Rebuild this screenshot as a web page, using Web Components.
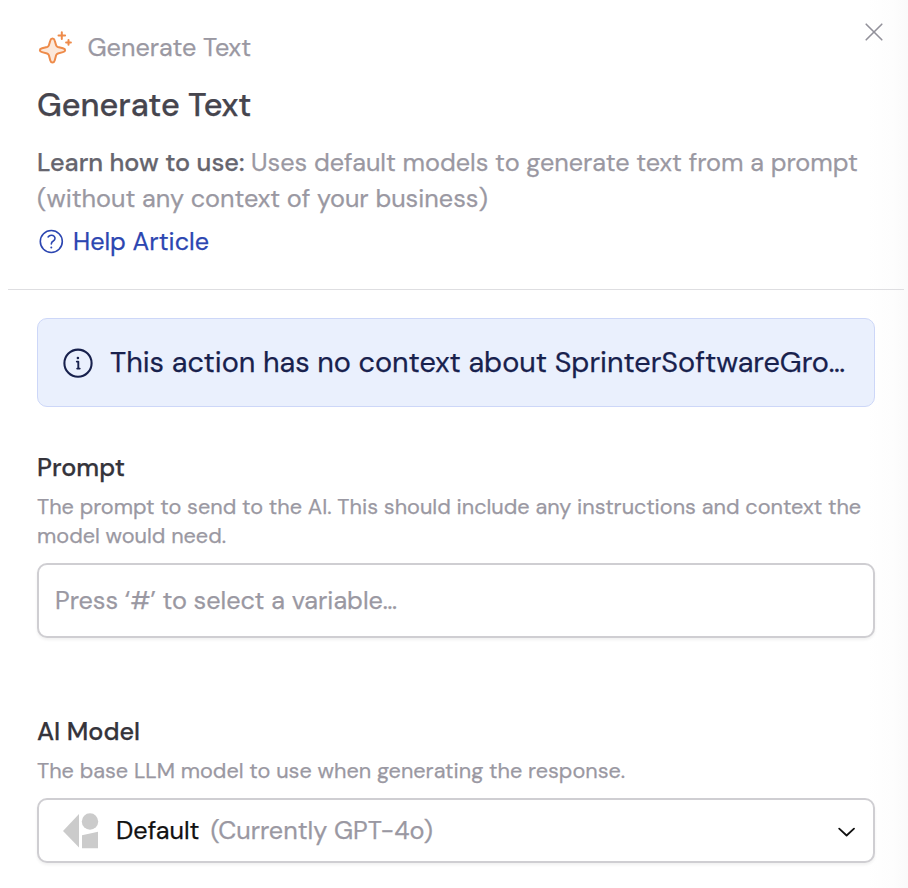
<!DOCTYPE html>
<html lang="en">
<head>
<meta charset="utf-8">
<title>Generate Text</title>
<style>
body {
  margin: 0;
  background: #fff;
  font-family: "DM Sans", Inter, "Liberation Sans", sans-serif;
}
</style>
</head>
<body>

<action-panel>
  <panel-header slot="header" name="Generate Text" heading="Generate Text">
    <b>Learn how to use:</b> Uses default models to generate text from a prompt<br>(without any context of your business)
    <help-link slot="help">Help Article</help-link>
  </panel-header>
  <info-banner>This action has no context about SprinterSoftwareGro…</info-banner>
  <form-field>
    <span slot="label">Prompt</span>
    The prompt to send to the AI. This should include any instructions and context the<br>model would need.
    <prompt-input slot="control" placeholder="Press ‘#’ to select a variable…"></prompt-input>
  </form-field>
  <form-field>
    <span slot="label">AI Model</span>
    The base LLM model to use when generating the response.
    <model-select slot="control" value="Default" note="(Currently GPT-4o)"></model-select>
  </form-field>
</action-panel>

<script>
class BaseElement extends HTMLElement {
  constructor() {
    super()
    const template = document.createElement("template")
    template.innerHTML = this.constructor.markup
    this.attachShadow({ mode: "open" }).append(template.content.cloneNode(true))
  }

  fill(selector, attribute) {
    this.shadowRoot.querySelector(selector).textContent = this.getAttribute(attribute)
  }
}

class ActionPanel extends BaseElement {
  static markup = /*html*/`
<style>
:host {
  display: block;
  box-sizing: border-box;
  height: 888px;
  overflow: hidden;
  background: linear-gradient(to right, #fff 868px, #fdfdfd 892px, #fafafa 908px);
  font-size: 25.22px;
  -webkit-text-stroke: 0.25px;
}
.body { padding: 28px 33px 0 37px; }
::slotted(form-field) { margin-top: 43px; }
::slotted(form-field:last-child) { margin-top: 76px; }
</style>
<slot name="header"></slot>
<div class="body"><slot></slot></div>
`
}

class PanelHeader extends BaseElement {
  static markup = /*html*/`
<style>
:host {
  display: block;
  margin: 0 4px 0 8px;
  padding: 28px 0 29px 29px;
  border-bottom: 1px solid #dedee1;
}
.top {
  display: flex;
  align-items: center;
  height: 40px;
}
.spark { width: 36px; height: 36px; margin: -4px 14.5px 0 0; }
.name { flex: 1; margin-top: -2px; color: #9a98a2; }
.close {
  width: 18px;
  height: 18px;
  margin: -33px 21.5px 0 0;
}
h1 {
  margin: 15px 0 18px;
  font-size: 32.4px;
  line-height: 44px;
  font-weight: 500;
  color: #46454e;
}
p {
  margin: 0 0 7px;
  line-height: 36px;
  white-space: nowrap;
  color: #9a98a2;
}
::slotted(b) { font-weight: 500; color: #66656e; }
</style>
<div class="top">
  <svg class="spark" viewBox="0 0 36 36" fill="none" stroke="#ee8b4a" stroke-width="2" stroke-linecap="round" stroke-linejoin="round">
    <path fill="#fce8da" d="M13.3 12.5C14 9.8 17 9.8 17.7 12.5L19.1 17.2Q19.5 18.6 20.9 19L25.9 20.3C28.9 21.1 28.9 23.3 25.9 24.1L20.9 25.5Q19.5 25.9 19.1 27.3L17.7 32.4C17 35.1 14 35.1 13.3 32.4L11.9 27.3Q11.5 25.9 10.1 25.5L5.1 24.1C2.1 23.3 2.1 21.1 5.1 20.3L10.1 19Q11.5 18.6 11.9 17.2Z"/>
    <path d="M24.8 4.3V10.9M21.5 7.6H28.1M31.5 12V16.8M29.1 14.4H33.9"/>
  </svg>
  <span class="name"></span>
  <svg class="close" viewBox="0 0 18 18" fill="none" stroke="#92919a" stroke-width="1.6" stroke-linecap="round">
    <path d="M1.2 1.2L16.8 16.8M16.8 1.2L1.2 16.8"/>
  </svg>
</div>
<h1></h1>
<p><slot></slot></p>
<slot name="help"></slot>
`

  connectedCallback() {
    this.fill(".name", "name")
    this.fill("h1", "heading")
  }
}

class HelpLink extends BaseElement {
  static markup = /*html*/`
<style>
:host {
  display: flex;
  align-items: center;
  height: 36px;
  color: #2c46b1;
  cursor: pointer;
}
svg { width: 26px; height: 26px; margin: 0 9px 0 1px; }
span { margin-top: -2px; }
</style>
<svg viewBox="0 0 26 26" fill="none" stroke="currentColor" stroke-width="1.6" stroke-linecap="round" stroke-linejoin="round">
  <circle cx="13.3" cy="12.5" r="11"/>
  <path d="M10.1 7.9C11.7 5.9 14.6 5.8 16.1 7.3C17.7 9 17 11.1 15.3 12C14 12.7 13.3 13.3 13.3 14.9"/>
  <circle cx="13.3" cy="18.6" r="1" fill="currentColor" stroke="none"/>
</svg>
<span><slot></slot></span>
`
}

class InfoBanner extends BaseElement {
  static markup = /*html*/`
<style>
:host {
  display: flex;
  align-items: center;
  box-sizing: border-box;
  height: 89px;
  padding: 0 25px 0 24px;
  border: 1px solid #cdd7f8;
  border-radius: 10px;
  background: #eaf0fd;
  color: #18214d;
  font-size: 28.8px;
}
svg { flex: none; width: 32px; height: 32px; margin-right: 16px; }
span { margin-top: -2px; white-space: nowrap; }
</style>
<svg viewBox="0 0 32 32" fill="none" stroke="currentColor" stroke-width="2.1" stroke-linecap="round" stroke-linejoin="round">
  <circle cx="16" cy="16.2" r="13.6"/>
  <path stroke-width="1.9" d="M14.8 14.6H16.3V21.4M15.2 21.6H17.7"/>
  <circle cx="15.9" cy="11" r="1.3" fill="currentColor" stroke="none"/>
</svg>
<span><slot></slot></span>
`
}

class FormField extends BaseElement {
  static markup = /*html*/`
<style>
:host { display: block; }
.label {
  line-height: 36px;
  font-weight: 500;
  color: #35343b;
}
.description {
  margin: 7px 0 12px;
  font-size: 21.66px;
  line-height: 29px;
  white-space: nowrap;
  color: #9a98a2;
}
</style>
<div class="label"><slot name="label"></slot></div>
<div class="description"><slot></slot></div>
<slot name="control"></slot>
`
}

class PromptInput extends BaseElement {
  static markup = /*html*/`
<style>
:host {
  display: flex;
  align-items: center;
  box-sizing: border-box;
  height: 75px;
  padding: 0 16px;
  border: 2px solid #cfced2;
  border-radius: 10px;
  background: #fff;
  box-shadow: 0 2px 3px rgba(0, 0, 0, 0.06);
  color: #9a98a2;
}
</style>
<span></span>
`

  connectedCallback() {
    this.fill("span", "placeholder")
  }
}

class ModelSelect extends BaseElement {
  static markup = /*html*/`
<style>
:host {
  display: flex;
  align-items: center;
  box-sizing: border-box;
  height: 65px;
  padding: 0 17px 0 23px;
  border: 2px solid #cfced2;
  border-radius: 10px;
  background: #fff;
  box-shadow: 0 2px 3px rgba(0, 0, 0, 0.06);
}
.logo { width: 38px; height: 38px; margin-right: 16px; }
.value { margin-right: 11px; color: #111; }
.note { flex: 1; color: #9a98a2; }
.arrow { width: 18px; height: 10px; margin-top: 3px; }
</style>
<svg class="logo" viewBox="0 0 38 38" fill="#cbcbcb">
  <path d="M17 2V35.5L1 19Z"/>
  <circle cx="28" cy="9.5" r="8.2"/>
  <path d="M20 23.3L36 19.7V36.2H20Z"/>
</svg>
<span class="value"></span>
<span class="note"></span>
<svg class="arrow" viewBox="0 0 18 10" fill="none" stroke="#111" stroke-width="1.8" stroke-linecap="round" stroke-linejoin="round">
  <path d="M1.2 1.6L8.6 8.5L16 1.6"/>
</svg>
`

  connectedCallback() {
    this.fill(".value", "value")
    this.fill(".note", "note")
  }
}

customElements.define("action-panel", ActionPanel)
customElements.define("panel-header", PanelHeader)
customElements.define("help-link", HelpLink)
customElements.define("info-banner", InfoBanner)
customElements.define("form-field", FormField)
customElements.define("prompt-input", PromptInput)
customElements.define("model-select", ModelSelect)
</script>
</body>
</html>
